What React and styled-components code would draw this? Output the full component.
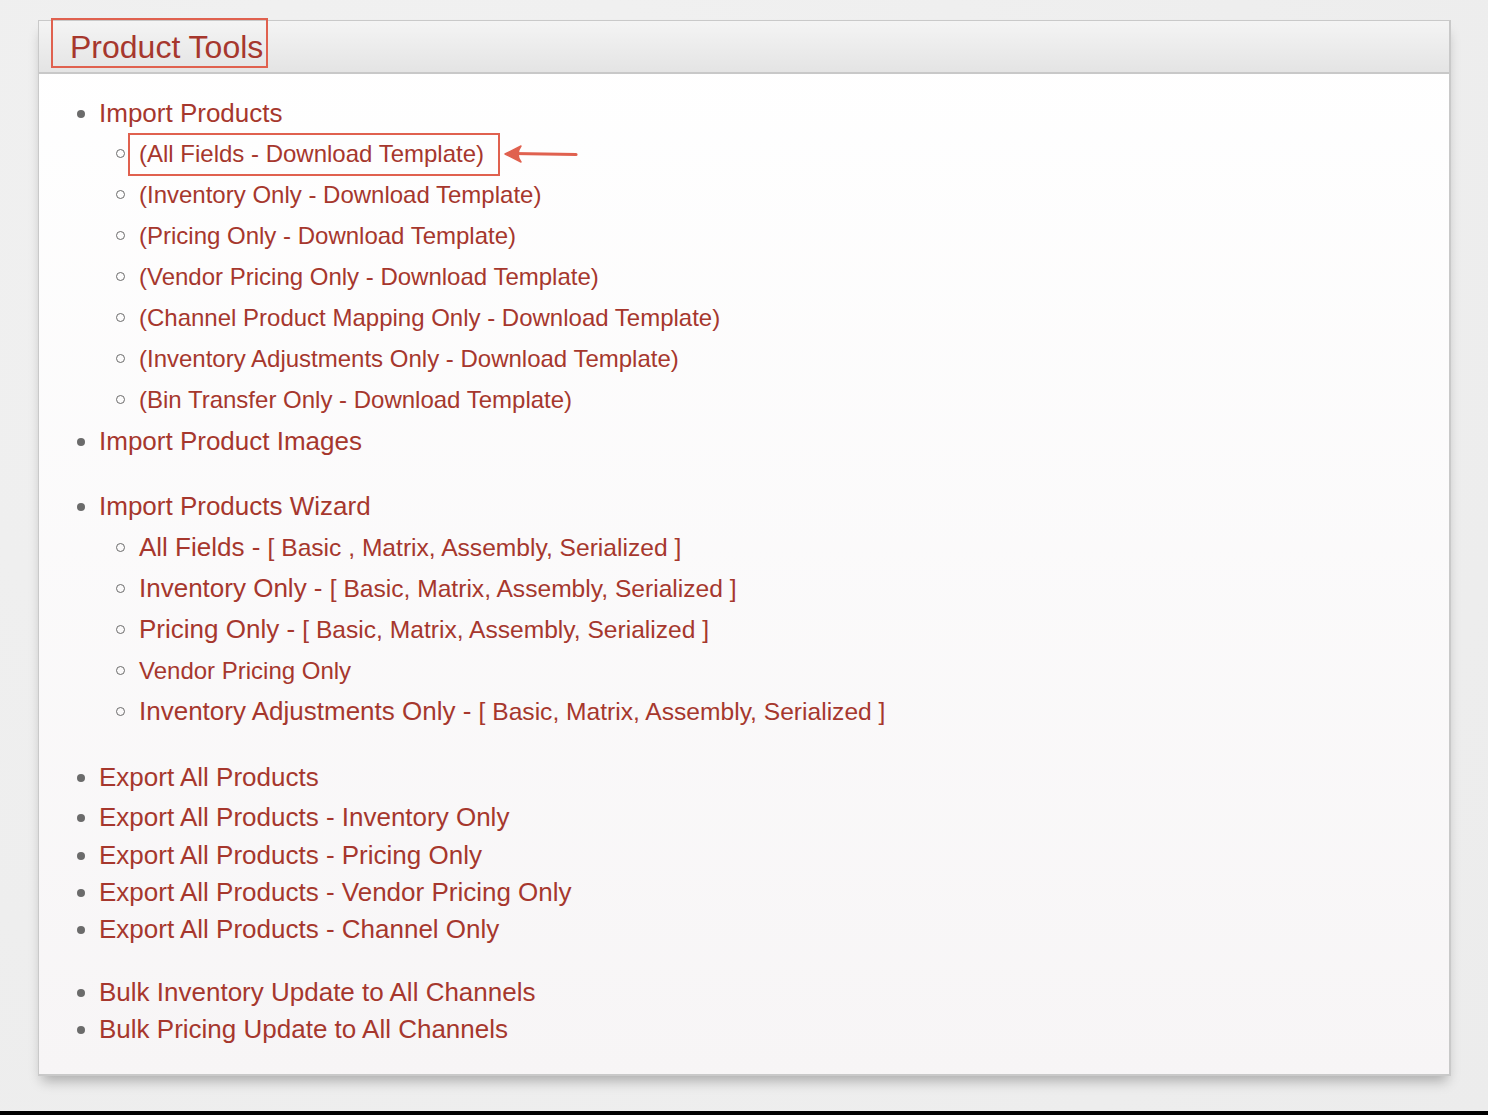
import React from "react";
import styled, { createGlobalStyle } from "styled-components";

const Global = createGlobalStyle`
  html, body { margin: 0; padding: 0; }
  body {
    background: #eeeeee;
    font-family: "Liberation Sans", Arial, Helvetica, sans-serif;
  }
`;

const Page = styled.div`
  height: 1115px;
  display: flex;
  flex-direction: column;
  background: radial-gradient(circle at 30% 20%, #f1f1f1 0%, #ececec 100%);
`;

const Panel = styled.section`
  margin: 20px 0 0 38px;
  width: 1413px;
  box-sizing: border-box;
  border: 1px solid #c9c9c9;
  border-right-width: 2px;
  border-bottom-width: 2px;
  background: linear-gradient(#ffffff, #f7f5f6);
  box-shadow: 0 9px 12px -4px rgba(0, 0, 0, 0.28);
`;

const Header = styled.header`
  height: 51px;
  display: flex;
  align-items: center;
  padding-left: 31px;
  background: linear-gradient(#f4f4f4, #e4e4e4);
  border-bottom: 2px solid #c8c8c8;
  position: relative;
`;

const Title = styled.h1`
  margin: 0;
  font-size: 32px;
  font-weight: 400;
  color: #a6372d;
  position: relative;
  top: 1px;
`;

const Highlight = styled.span`
  position: absolute;
  pointer-events: none;
  border: 2px solid #e0614f;
  top: ${(p) => p.$t}px;
  bottom: ${(p) => p.$b}px;
  left: ${(p) => p.$l}px;
  right: ${(p) => p.$r}px;
`;

const Body = styled.div`
  padding: 21px 0 26px 0;
`;

const List = styled.ul`
  list-style: none;
  margin: 0;
  padding: 0;
`;

const MainItem = styled.li`
  margin-top: ${(p) => p.$mt || 0}px;
`;

const MainRow = styled.div`
  display: flex;
  align-items: center;
  height: 37px;
  padding-left: 38px;
`;

const Disc = styled.span`
  width: 8px;
  height: 8px;
  border-radius: 50%;
  background: #6b6b6b;
  margin-right: 14px;
  flex: none;
`;

const MainLink = styled.a`
  font-size: 26px;
  color: #a6372d;
  text-decoration: none;
  white-space: nowrap;
`;

const SubList = styled.ul`
  list-style: none;
  margin: ${(p) => p.$top}px 0 3px;
  padding: 0;
`;

const SubRow = styled.li`
  display: flex;
  align-items: center;
  height: 41px;
  padding-left: 77px;
`;

const Circle = styled.span`
  width: 7px;
  height: 7px;
  border-radius: 50%;
  border: 1.3px solid #6b6b6b;
  margin-right: 14px;
  flex: none;
  box-sizing: content-box;
`;

const SubLink = styled.a`
  position: relative;
  font-size: 24px;
  color: #a6372d;
  text-decoration: none;
  white-space: nowrap;
`;

const Lead = styled.span`
  font-size: 26px;
`;

const Rest = styled.span`
  font-size: 24.6px;
`;

const Arrow = styled.svg`
  margin-left: 20px;
  flex: none;
`;

const Spacer = styled.div`
  flex: 1;
`;

const BottomBar = styled.div`
  height: 4px;
  background: #000;
`;

const templates = [
  "(All Fields - Download Template)",
  "(Inventory Only - Download Template)",
  "(Pricing Only - Download Template)",
  "(Vendor Pricing Only - Download Template)",
  "(Channel Product Mapping Only - Download Template)",
  "(Inventory Adjustments Only - Download Template)",
  "(Bin Transfer Only - Download Template)",
];

const types = "[ Basic, Matrix, Assembly, Serialized ]";
const wizard = [
  { lead: "All Fields - ", rest: "[ Basic , Matrix, Assembly, Serialized ]" },
  { lead: "Inventory Only - ", rest: types },
  { lead: "Pricing Only - ", rest: types },
  { plain: "Vendor Pricing Only" },
  { lead: "Inventory Adjustments Only - ", rest: types },
];

const exportsList = [
  { label: "Export All Products", mt: 27 },
  { label: "Export All Products - Inventory Only", mt: 3 },
  { label: "Export All Products - Pricing Only", mt: 1 },
  { label: "Export All Products - Vendor Pricing Only", mt: 0 },
  { label: "Export All Products - Channel Only", mt: 0 },
];

const Main = ({ children, mt, sub }) => (
  <MainItem $mt={mt}>
    <MainRow>
      <Disc />
      <MainLink href="#">{children}</MainLink>
    </MainRow>
    {sub}
  </MainItem>
);

export default function App() {
  return (
    <Page>
      <Global />
      <Panel>
        <Header>
          <Title>
            Product Tools
            <Highlight $t={-11} $b={-2} $l={-19} $r={-5} />
          </Title>
        </Header>
        <Body>
          <List>
            <Main
              sub={
                <SubList $top={1}>
                  {templates.map((t, i) => (
                    <SubRow key={t}>
                      <Circle />
                      <SubLink href="#">
                        {t}
                        {i === 0 && <Highlight $t={-7} $b={-8} $l={-11} $r={-16} />}
                      </SubLink>
                      {i === 0 && (
                        <Arrow width="74" height="22" viewBox="0 0 74 22">
                          <path
                            d="M72 11.5 L9 10.5"
                            stroke="#e0614f"
                            strokeWidth="3.2"
                            strokeLinecap="round"
                            fill="none"
                          />
                          <path
                            d="M1 11 L17 3 Q11 11 17 19 Z"
                            fill="#e0614f"
                            stroke="#e0614f"
                            strokeWidth="1.5"
                            strokeLinejoin="round"
                          />
                        </Arrow>
                      )}
                    </SubRow>
                  ))}
                </SubList>
              }
            >
              Import Products
            </Main>
            <Main>Import Product Images</Main>
            <Main
              mt={28}
              sub={
                <SubList $top={2}>
                  {wizard.map((w, i) => (
                    <SubRow key={i}>
                      <Circle />
                      <SubLink href="#">
                        {w.plain ? (
                          w.plain
                        ) : (
                          <>
                            <Lead>{w.lead}</Lead>
                            <Rest>{w.rest}</Rest>
                          </>
                        )}
                      </SubLink>
                    </SubRow>
                  ))}
                </SubList>
              }
            >
              Import Products Wizard
            </Main>
            {exportsList.map((e) => (
              <Main key={e.label} mt={e.mt}>
                {e.label}
              </Main>
            ))}
            <Main mt={26}>Bulk Inventory Update to All Channels</Main>
            <Main>Bulk Pricing Update to All Channels</Main>
          </List>
        </Body>
      </Panel>
      <Spacer />
      <BottomBar />
    </Page>
  );
}
